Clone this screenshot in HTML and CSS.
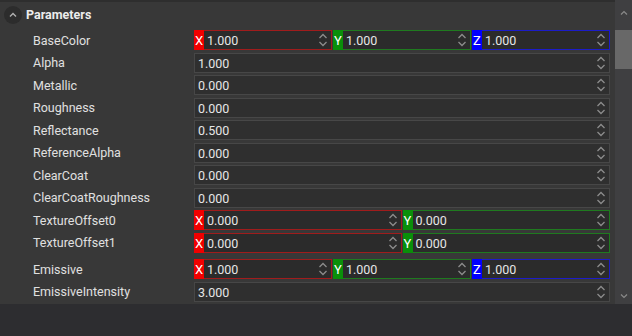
FILE: index.html
```html
<!DOCTYPE html>
<html lang="en">
<head>
  <meta charset="utf-8" />
  <title>Parameters</title>
  <link rel="stylesheet" href="styles.css">
</head>
<body>
  <div class="panel">
    <div class="content">
      <div class="group-head">
        <span class="fold">
          <svg width="10" height="10" viewBox="0 0 10 10"><path d="M2 6.5 L5 3.5 L8 6.5" fill="none" stroke="#b0b0b0" stroke-width="1.4"/></svg>
        </span>
        <span class="group-title">Parameters</span>
      </div>

      <div class="row">
        <span class="label">BaseColor</span>
        <div class="value vec">
          <div class="comp x"><span class="axis">X</span><span class="num">1.000</span><span class="spin"></span></div>
          <div class="comp y"><span class="axis">Y</span><span class="num">1.000</span><span class="spin"></span></div>
          <div class="comp z"><span class="axis">Z</span><span class="num">1.000</span><span class="spin"></span></div>
        </div>
      </div>
      <div class="row">
        <span class="label">Alpha</span>
        <div class="value"><div class="field"><span class="num">1.000</span><span class="spin"></span></div></div>
      </div>
      <div class="row">
        <span class="label">Metallic</span>
        <div class="value"><div class="field"><span class="num">0.000</span><span class="spin"></span></div></div>
      </div>
      <div class="row">
        <span class="label">Roughness</span>
        <div class="value"><div class="field"><span class="num">0.000</span><span class="spin"></span></div></div>
      </div>
      <div class="row">
        <span class="label">Reflectance</span>
        <div class="value"><div class="field"><span class="num">0.500</span><span class="spin"></span></div></div>
      </div>
      <div class="row">
        <span class="label">ReferenceAlpha</span>
        <div class="value"><div class="field"><span class="num">0.000</span><span class="spin"></span></div></div>
      </div>
      <div class="row">
        <span class="label">ClearCoat</span>
        <div class="value"><div class="field"><span class="num">0.000</span><span class="spin"></span></div></div>
      </div>
      <div class="row">
        <span class="label">ClearCoatRoughness</span>
        <div class="value"><div class="field"><span class="num">0.000</span><span class="spin"></span></div></div>
      </div>
      <div class="row">
        <span class="label">TextureOffset0</span>
        <div class="value vec">
          <div class="comp x"><span class="axis">X</span><span class="num">0.000</span><span class="spin"></span></div>
          <div class="comp y"><span class="axis">Y</span><span class="num">0.000</span><span class="spin"></span></div>
        </div>
      </div>
      <div class="row">
        <span class="label">TextureOffset1</span>
        <div class="value vec">
          <div class="comp x"><span class="axis">X</span><span class="num">0.000</span><span class="spin"></span></div>
          <div class="comp y"><span class="axis">Y</span><span class="num">0.000</span><span class="spin"></span></div>
        </div>
      </div>
      <div class="row row-gap">
        <span class="label">Emissive</span>
        <div class="value vec">
          <div class="comp x"><span class="axis">X</span><span class="num">1.000</span><span class="spin"></span></div>
          <div class="comp y"><span class="axis">Y</span><span class="num">1.000</span><span class="spin"></span></div>
          <div class="comp z"><span class="axis">Z</span><span class="num">1.000</span><span class="spin"></span></div>
        </div>
      </div>
      <div class="row">
        <span class="label">EmissiveIntensity</span>
        <div class="value"><div class="field"><span class="num">3.000</span><span class="spin"></span></div></div>
      </div>
    </div>

    <div class="scrollbar">
      <span class="sb-btn">
        <svg width="10" height="8" viewBox="0 0 10 8"><path d="M2 5.5 L5 2.5 L8 5.5" fill="none" stroke="#8a8a8a" stroke-width="1.2"/></svg>
      </span>
      <span class="sb-thumb"></span>
      <span class="sb-space"></span>
      <span class="sb-btn sb-down">
        <svg width="10" height="8" viewBox="0 0 10 8"><path d="M2 2.5 L5 5.5 L8 2.5" fill="none" stroke="#8a8a8a" stroke-width="1.2"/></svg>
      </span>
    </div>
  </div>
  <div class="footer"></div>
</body>
</html>
```

FILE: styles.css
```css
*{margin:0;padding:0;box-sizing:border-box;}
html,body{width:100%;height:100%;}
body{
  background:#2d2d30;
  font-family:Roboto,"Liberation Sans",sans-serif;
  font-size:12.5px;
  color:#e2e2e2;
  overflow:hidden;
}
.panel{
  display:flex;
  height:304px;
  background:#383838;
}
.content{
  flex:1;
  padding-right:5px;
  border-top:2px solid #2e2e2e;
}
.group-head{
  display:flex;
  align-items:center;
  height:27px;
  padding-left:4px;
  padding-bottom:2px;
}
.fold{
  display:flex;
  align-items:center;
  justify-content:center;
  width:18px;
  height:18px;
  border-radius:50%;
  background:#2c2c2c;
}
.group-title{
  margin-left:4px;
  font-weight:bold;
  color:#ececec;
}
.row{
  display:flex;
  align-items:flex-start;
  height:22px;
  padding-top:1px;
}
.row:nth-child(even){
  height:23px;
}
.row-gap{
  margin-top:4px;
}
.label{
  align-self:center;
  width:194px;
  padding-left:33px;
  margin-bottom:2px;
  color:#e0e0e0;
}
.value{
  flex:1;
  display:flex;
  height:20px;
}
.field{
  flex:1;
  display:flex;
  align-items:center;
  background:#2f2f2f;
  border:1px solid #474747;
}
.num{
  flex:1;
  padding-left:3px;
  color:#e6e6e6;
}
.spin{
  width:10px;
  height:16px;
  margin-right:3px;
  background:url("data:image/svg+xml;utf8,<svg xmlns='http://www.w3.org/2000/svg' width='10' height='16' viewBox='0 0 10 16'><path d='M1.5 6 L5 2.5 L8.5 6 M1.5 10 L5 13.5 L8.5 10' fill='none' stroke='%238c8c8c' stroke-width='1.3'/></svg>") no-repeat center;
}
.comp{
  flex:1;
  display:flex;
  align-items:center;
  background:#2b2b2b;
  border:1px solid;
  border-left:none;
}
.comp + .comp{
  margin-left:1px;
}
.axis{
  display:flex;
  align-items:center;
  justify-content:center;
  width:10px;
  height:20px;
  margin-top:-1px;
  margin-bottom:-1px;
  color:#fff;
  font-size:13px;
}
.x{border-color:#a01c1c;}
.x .axis{background:#f00000;}
.y{border-color:#1f7a1f;}
.y .axis{background:#0a8f0a;}
.z{border-color:#1c1cc8;}
.z .axis{background:#0000ff;}
.scrollbar{
  display:flex;
  flex-direction:column;
  width:17px;
  background:#3f3f41;
}
.sb-btn{
  display:flex;
  align-items:center;
  justify-content:center;
  height:26px;
}
.sb-thumb{
  height:39px;
  margin-top:4px;
  background:#686868;
}
.sb-space{
  flex:1;
}
.sb-down{
  height:17px;
}
.footer{
  height:32px;
}
```
